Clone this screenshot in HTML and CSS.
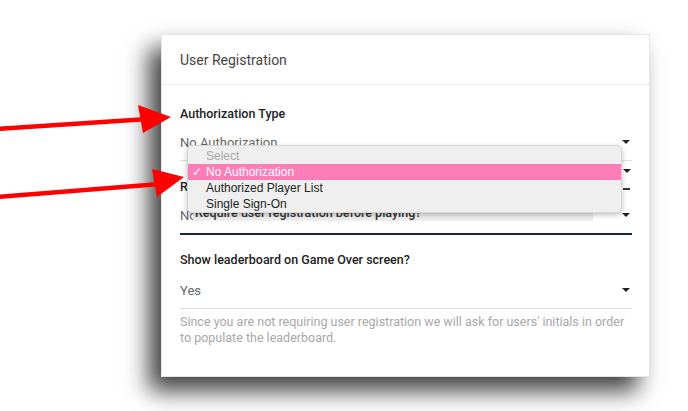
FILE: index.html
```html
<!DOCTYPE html>
<html>
<head>
<meta charset="utf-8">
<link rel="stylesheet" href="styles.css">
</head>
<body>
<div class="card">
  <div class="card-header">User Registration</div>
  <div class="card-body">
    <div class="field">
      <div class="label">Authorization Type</div>
      <div class="select"><span>No Authorization</span><i class="caret"></i></div>
    </div>
    <div class="field f2">
      <div class="label">Require user registration?</div>
      <div class="select focused"><span>No</span><i class="caret"></i></div>
    </div>
    <div class="field f3">
      <div class="label">Show leaderboard on Game Over screen?</div>
      <div class="select"><span>Yes</span><i class="caret"></i></div>
      <p class="help">Since you are not requiring user registration we will ask for users' initials in order to populate the leaderboard.</p>
    </div>
  </div>
</div>

<div class="ghost">Require user registration before playing?</div>
<i class="caret ghost-caret"></i>
<i class="ghost-dash"></i>

<ul class="dropdown">
  <li class="opt disabled">Select</li>
  <li class="opt active"><span class="check">✓</span>No Authorization</li>
  <li class="opt">Authorized Player List</li>
  <li class="opt">Single Sign-On</li>
</ul>

<svg class="arrows" width="688" height="411" viewBox="0 0 688 411">
  <line x1="-2" y1="129" x2="148" y2="119" stroke="#ff0000" stroke-width="4.5"/>
  <polygon points="171,117 138,105 143,133" fill="#ff0000"/>
  <line x1="-2" y1="197" x2="160" y2="184" stroke="#ff0000" stroke-width="4.5"/>
  <polygon points="184,177 152,169 157,197" fill="#ff0000"/>
</svg>
</body>
</html>
```

FILE: styles.css
```css
* { box-sizing: border-box; }
html, body { margin: 0; padding: 0; background: #fff; }
body {
  width: 688px;
  height: 411px;
  overflow: hidden;
  position: relative;
  font-family: Roboto, "Liberation Sans", sans-serif;
}
.card {
  margin: 34px 0 0 161px;
  width: 489px;
  height: 343px;
  background: #fff;
  border: 1px solid #e6e6e6;
  box-shadow: -12px 14px 22px rgba(0,0,0,0.75);
}
.card-header {
  height: 50px;
  padding: 0 18px;
  display: flex;
  align-items: center;
  font-size: 14px;
  color: #444;
  border-bottom: 1px solid #ededed;
}
.card-body { padding: 0 17px 0 18px; }
.field { padding-top: 21px; }
.field.f2 { padding-top: 18px; }
.field.f3 { padding-top: 17px; }
.label {
  font-size: 12.5px;
  line-height: 16px;
  font-weight: 500;
  color: #222;
}
.select {
  margin-top: 6px;
  height: 33px;
  padding-bottom: 4px;
  display: flex;
  align-items: center;
  justify-content: space-between;
  font-size: 13px;
  color: #666;
  border-bottom: 1px solid #dedede;
}
.select.focused { border-bottom: 2px solid #1b2842; height: 34px; }
.f3 .select { margin-top: 8px; }
.caret {
  display: block;
  width: 0; height: 0;
  margin-right: 2px;
  border-left: 4px solid transparent;
  border-right: 4px solid transparent;
  border-top: 4px solid #222;
}
.help {
  margin: 5px 0 0;
  font-size: 12.5px;
  line-height: 16px;
  color: #a8a8a8;
}
.ghost {
  position: absolute;
  left: 193px;
  top: 205px;
  width: 400px;
  height: 16px;
  padding-left: 2px;
  background: #eeeeee;
  font-family: Roboto, sans-serif;
  font-size: 12.5px;
  line-height: 16px;
  font-weight: 500;
  color: #333;
}
.ghost-caret { position: absolute; left: 623px; top: 169px; margin: 0; }
.ghost-dash {
  position: absolute; left: 623px; top: 188px;
  width: 7px; height: 1.5px; background: #333;
}
.dropdown {
  position: absolute;
  left: 187px;
  top: 145px;
  width: 435px;
  height: 68px;
  margin: 0;
  padding: 2px 0 0;
  list-style: none;
  background: #efefef;
  border: 1px solid #d6d6d6;
  border-radius: 5px;
  box-shadow: 0 2px 5px rgba(0,0,0,0.25);
  font-family: "Liberation Sans", sans-serif;
  font-size: 12px;
  color: #222;
}
.opt {
  height: 16px;
  line-height: 16px;
  padding-left: 18px;
  position: relative;
}
.opt.disabled { color: #a9a9a9; }
.opt.active { background: #ff7db7; color: #fff; }
.check {
  position: absolute;
  left: 4px;
  top: 0;
  font-size: 12px;
}
.arrows {
  position: absolute;
  left: 0; top: 0;
  pointer-events: none;
}
```
